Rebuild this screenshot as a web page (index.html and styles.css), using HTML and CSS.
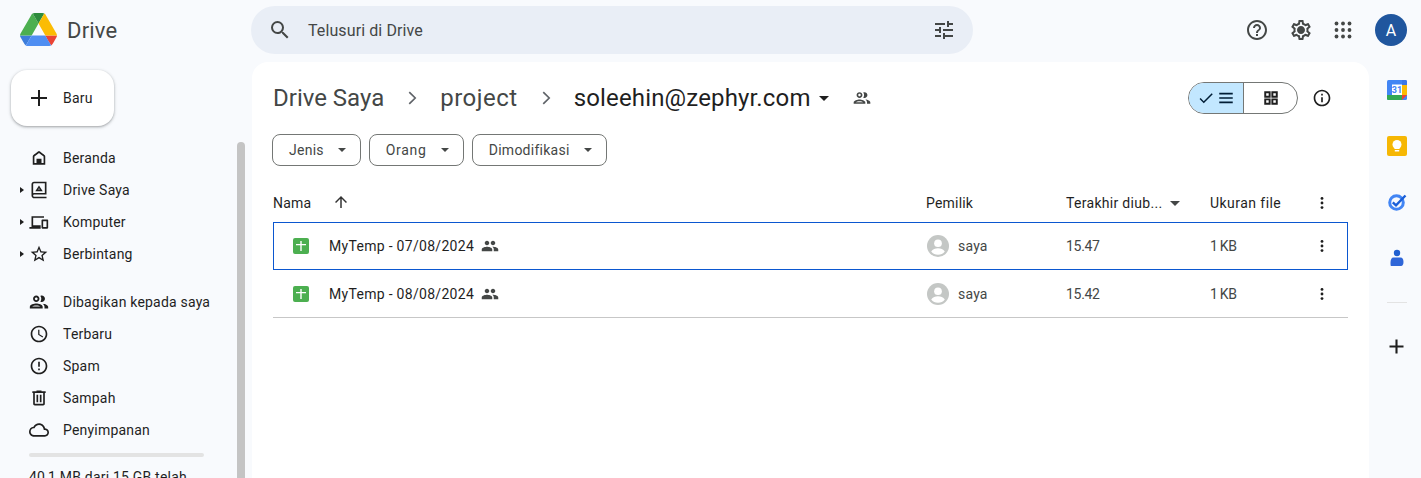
FILE: index.html
```html
<!DOCTYPE html>
<html lang="id">
<head>
    <meta charset="UTF-8">
    <meta name="viewport" content="width=device-width, initial-scale=1.0">
    <title>Drive Saya - Google Drive</title>
    <link rel="stylesheet" href="styles.css">
</head>
<body>
    <svg class="sprite" aria-hidden="true">
        <symbol id="i-group" viewBox="0 0 24 24"><path d="M16 11c1.660 0 2.990-1.340 2.990-3S17.660 5 16 5c-1.660 0-3 1.340-3 3s1.340 3 3 3zm-8 0c1.660 0 2.990-1.340 2.990-3S9.660 5 8 5C6.340 5 5 6.340 5 8s1.340 3 3 3zm0 2c-2.330 0-7 1.170-7 3.500V19h14v-2.500c0-2.330-4.670-3.500-7-3.500zm8 0c-.29 0-.62.02-.97.05 1.160.84 1.970 1.970 1.970 3.450V19h6v-2.500c0-2.330-4.670-3.500-7-3.500z"/></symbol>
        <symbol id="i-people" viewBox="0 0 24 24"><path d="M9 13.750c-2.340 0-7 1.170-7 3.500V19h14v-1.750c0-2.330-4.660-3.500-7-3.500zM4.340 17c.84-.58 2.870-1.250 4.660-1.250s3.820.67 4.660 1.250H4.340zM9 12c1.930 0 3.500-1.570 3.500-3.500S10.930 5 9 5 5.500 6.570 5.500 8.500 7.070 12 9 12zm0-5c.83 0 1.500.67 1.500 1.500S9.830 10 9 10s-1.500-.67-1.500-1.500S8.170 7 9 7zm7.040 6.810c1.160.84 1.960 1.960 1.960 3.440V19h4v-1.750c0-2.020-3.500-3.170-5.960-3.440zM15 12c1.930 0 3.500-1.570 3.500-3.500S16.930 5 15 5c-.54 0-1.040.13-1.500.35.63.89 1 1.980 1 3.150s-.37 2.260-1 3.150c.46.22.96.35 1.500.35z"/></symbol>
        <symbol id="i-more" viewBox="0 0 24 24"><circle cx="12" cy="6.500" r="1.700"/><circle cx="12" cy="12" r="1.700"/><circle cx="12" cy="17.500" r="1.700"/></symbol>
        <symbol id="i-chevron" viewBox="0 0 24 24"><path d="M9 5.500 15.500 12 9 18.500" fill="none" stroke="#5f6368" stroke-width="1.800"/></symbol>
        <symbol id="i-sheet" viewBox="0 0 16 16"><rect width="16" height="16" rx="2" fill="#4caf50"/><path d="M3 6h4.300V3h1.400v3H13v1.300H8.700V13H7.300V7.300H3z" fill="#fff"/></symbol>
        <symbol id="i-avatar" viewBox="0 0 24 24"><circle cx="12" cy="12" r="12" fill="#c4c7c5"/><circle cx="12" cy="9" r="4.200" fill="#fff"/><path d="M4.600 18c1.600-2.600 4.400-3.600 7.400-3.600s5.800 1 7.400 3.600C17.600 20.400 15 21.600 12 21.600S6.400 20.400 4.600 18z" fill="#fff"/></symbol>
    </svg>

    <header class="topbar">
        <div class="brand">
            <svg class="brand-logo" viewBox="0 0 87.300 78"><path d="m6.600 66.850 3.850 6.650c.8 1.400 1.950 2.500 3.300 3.300l13.750-23.800h-27.500c0 1.550.4 3.100 1.200 4.500z" fill="#3d7ddb"/><path d="m43.650 25-13.750-23.800c-1.350.8-2.500 1.900-3.300 3.300l-25.400 44a9.060 9.060 0 0 0 -1.200 4.500h27.500z" fill="#4caf50"/><path d="m73.550 76.800c1.350-.8 2.500-1.900 3.300-3.300l1.600-2.750 7.650-13.250c.8-1.400 1.200-2.950 1.200-4.500h-27.502l5.852 11.500z" fill="#ea4335"/><path d="m43.650 25 13.750-23.800c-1.350-.8-2.900-1.200-4.500-1.200h-18.500c-1.600 0-3.150.45-4.500 1.200z" fill="#2e8b3d"/><path d="m59.800 53h-32.300l-13.750 23.800c1.350.8 2.900 1.200 4.500 1.200h50.800c1.600 0 3.150-.45 4.500-1.200z" fill="#4f8ef2"/><path d="m73.400 26.500-12.700-22c-.8-1.400-1.950-2.500-3.300-3.300l-13.750 23.800 16.150 28h27.450c0-1.550-.4-3.100-1.200-4.500z" fill="#fbbc04"/></svg>
            <span class="brand-name">Drive</span>
        </div>
        <div class="search">
            <svg class="icon" viewBox="0 0 24 24"><path d="M15.500 14h-.79l-.28-.27A6.470 6.470 0 0 0 16 9.500 6.500 6.500 0 1 0 9.500 16c1.610 0 3.090-.59 4.230-1.570l.27.28v.79l5 4.990L20.490 19l-4.990-5zm-6 0C7.010 14 5 11.990 5 9.500S7.010 5 9.500 5 14 7.010 14 9.500 11.990 14 9.500 14z"/></svg>
            <span class="search-text">Telusuri di Drive</span>
            <svg class="icon" viewBox="0 0 24 24"><path d="M3 17v2h6v-2H3zM3 5v2h10V5H3zm10 16v-2h8v-2h-8v-2h-2v6h2zM7 9v2H3v2h4v2h2V9H7zm14 4v-2H11v2h10zm-6-4h2V7h4V5h-4V3h-2v6z"/></svg>
        </div>
        <div class="top-actions">
            <svg class="icon" viewBox="0 0 24 24"><path d="M11 18h2v-2h-2v2zm1-16C6.480 2 2 6.480 2 12s4.480 10 10 10 10-4.480 10-10S17.520 2 12 2zm0 18c-4.410 0-8-3.590-8-8s3.590-8 8-8 8 3.590 8 8-3.590 8-8 8zm0-14c-2.210 0-4 1.790-4 4h2c0-1.100.9-2 2-2s2 .9 2 2c0 2-3 1.750-3 5h2c0-2.250 3-2.500 3-5 0-2.210-1.790-4-4-4z"/></svg>
            <svg class="icon gear" viewBox="0 0 24 24"><path d="M19.430 12.980c.04-.32.07-.64.07-.98 0-.34-.03-.66-.07-.98l2.110-1.650c.19-.15.24-.42.12-.64l-2-3.460c-.09-.16-.26-.25-.44-.25-.06 0-.12.01-.17.03l-2.490 1c-.52-.4-1.080-.73-1.690-.98l-.38-2.650C14.460 2.180 14.250 2 14 2h-4c-.25 0-.46.18-.49.42l-.38 2.650c-.61.25-1.170.59-1.690.98l-2.490-1c-.06-.02-.12-.03-.18-.03-.17 0-.34.09-.43.25l-2 3.460c-.13.22-.07.49.12.64l2.110 1.650c-.04.32-.07.65-.07.98 0 .33.03.66.07.98l-2.110 1.650c-.19.15-.24.42-.12.64l2 3.460c.09.16.26.25.44.25.06 0 .12-.01.17-.03l2.490-1c.52.4 1.080.73 1.690.98l.38 2.650c.03.24.24.42.49.42h4c.25 0 .46-.18.49-.42l.38-2.650c.61-.25 1.170-.59 1.690-.98l2.490 1c.06.02.12.03.18.03.17 0 .34-.09.43-.25l2-3.460c.12-.22.07-.49-.12-.64l-2.110-1.650zm-1.980-1.710c.04.31.05.52.05.73 0 .21-.02.43-.05.73l-.14 1.130.89.7 1.080.84-.7 1.210-1.270-.51-1.040-.42-.9.68c-.43.32-.84.56-1.250.73l-1.060.43-.16 1.130-.2 1.350h-1.400l-.19-1.350-.16-1.130-1.060-.43c-.43-.18-.83-.41-1.230-.71l-.91-.7-1.060.43-1.270.51-.7-1.210 1.080-.84.89-.7-.14-1.130c-.03-.31-.05-.54-.05-.74s.02-.43.05-.73l.14-1.130-.89-.7-1.080-.84.7-1.210 1.270.51 1.040.42.9-.68c.43-.32.84-.56 1.250-.73l1.060-.43.16-1.130.2-1.350h1.390l.19 1.350.16 1.130 1.060.43c.43.18.83.41 1.230.71l.91.7 1.060-.43 1.270-.51.7 1.210-1.070.85-.89.7.14 1.130zM12 8c-2.210 0-4 1.790-4 4s1.790 4 4 4 4-1.790 4-4-1.790-4-4-4z"/></svg>
            <svg class="icon" viewBox="0 0 24 24"><circle cx="5.500" cy="5.500" r="1.900"/><circle cx="12" cy="5.500" r="1.900"/><circle cx="18.500" cy="5.500" r="1.900"/><circle cx="5.500" cy="12" r="1.900"/><circle cx="12" cy="12" r="1.900"/><circle cx="18.500" cy="12" r="1.900"/><circle cx="5.500" cy="18.500" r="1.900"/><circle cx="12" cy="18.500" r="1.900"/><circle cx="18.500" cy="18.500" r="1.900"/></svg>
            <div class="account">A</div>
        </div>
    </header>

    <div class="layout">
        <aside class="sidebar">
            <button class="new-btn">
                <svg class="icon" viewBox="0 0 24 24"><path d="M20 13h-7v7h-2v-7H4v-2h7V4h2v7h7v2z"/></svg>
                <span>Baru</span>
            </button>
            <div class="side-scroll">
                <nav class="nav">
                    <ul class="nav-group">
                        <li class="nav-item">
                            <svg class="icon" viewBox="0 0 24 24"><path d="M12 3.500c-.6 0-6.200 4.300-7 5.200-.5.5-.5 1-.5 1.800V20h15v-9.500c0-.8 0-1.300-.5-1.800-.8-.9-6.400-5.200-7-5.200zM17.500 18H15v-5H9v5H6.500v-7.800L12 5.900l5.500 4.300V18z"/></svg>
                            <span>Beranda</span>
                        </li>
                        <li class="nav-item">
                            <span class="caret"></span>
                            <svg class="icon" viewBox="0 0 24 24"><path d="M6 2h15v15.500H6.500c-.8 0-1.500.4-1.500 1.250S5.700 20 6.500 20H21v2H6.500C4.500 22 3 20.500 3 18.500V5c0-1.700 1.300-3 3-3zm0 2c-.6 0-1 .4-1 1v10.800c.5-.2 1-.3 1.500-.3H19V4H6zm6 2.500 4.500 7h-9l4.500-7zm0 3.400L11 11.500h2L12 9.900z" fill-rule="evenodd"/></svg>
                            <span>Drive Saya</span>
                        </li>
                        <li class="nav-item">
                            <span class="caret"></span>
                            <svg class="icon" viewBox="0 0 24 24"><path d="M3 5h15v2H5v9h9v4H.5v-2H3V5zm13 4h6c.6 0 1 .4 1 1v9c0 .6-.4 1-1 1h-6c-.6 0-1-.4-1-1v-9c0-.6.4-1 1-1zm1 2v7h4v-7h-4z"/></svg>
                            <span>Komputer</span>
                        </li>
                        <li class="nav-item">
                            <span class="caret"></span>
                            <svg class="icon" viewBox="0 0 24 24"><path d="M22 9.240l-7.190-.62L12 2 9.190 8.630 2 9.240l5.460 4.730L5.820 21 12 17.270 18.180 21l-1.630-7.030L22 9.240zM12 15.400l-3.760 2.270 1-4.280-3.320-2.880 4.380-.38L12 6.100l1.710 4.040 4.380.38-3.320 2.880 1 4.280L12 15.400z"/></svg>
                            <span>Berbintang</span>
                        </li>
                    </ul>
                    <ul class="nav-group">
                        <li class="nav-item">
                            <svg class="icon icon-wide"><use href="#i-people"/></svg>
                            <span>Dibagikan kepada saya</span>
                        </li>
                        <li class="nav-item">
                            <svg class="icon" viewBox="0 0 24 24"><path d="M11.990 2C6.470 2 2 6.480 2 12s4.470 10 9.990 10C17.520 22 22 17.520 22 12S17.520 2 11.990 2zM12 20c-4.420 0-8-3.580-8-8s3.580-8 8-8 8 3.580 8 8-3.580 8-8 8zm.5-13H11v6l5.250 3.150.75-1.230-4.500-2.670z"/></svg>
                            <span>Terbaru</span>
                        </li>
                        <li class="nav-item">
                            <svg class="icon" viewBox="0 0 24 24"><path d="M11 15h2v2h-2zm0-8h2v6h-2zm1-5C6.480 2 2 6.480 2 12s4.480 10 10 10 10-4.480 10-10S17.520 2 12 2zm0 18c-4.410 0-8-3.590-8-8s3.590-8 8-8 8 3.590 8 8-3.590 8-8 8z"/></svg>
                            <span>Spam</span>
                        </li>
                        <li class="nav-item">
                            <svg class="icon" viewBox="0 0 24 24"><path d="M15 4V3H9v1H4v2h1v13c0 1.100.9 2 2 2h10c1.100 0 2-.9 2-2V6h1V4h-5zm2 15H7V6h10v13zM9 8h2v9H9zm4 0h2v9h-2z"/></svg>
                            <span>Sampah</span>
                        </li>
                        <li class="nav-item">
                            <svg class="icon" viewBox="0 0 24 24"><path d="M19.350 10.040C18.670 6.590 15.640 4 12 4 9.110 4 6.600 5.640 5.350 8.040 2.340 8.360 0 10.910 0 14c0 3.310 2.690 6 6 6h13c2.760 0 5-2.240 5-5 0-2.640-2.050-4.780-4.650-4.960zM19 18H6c-2.210 0-4-1.790-4-4 0-2.050 1.530-3.760 3.560-3.970l1.070-.11.5-.95C8.080 7.140 9.940 6 12 6c2.620 0 4.880 1.860 5.390 4.430l.3 1.500 1.530.11c1.560.1 2.780 1.410 2.780 2.960 0 1.650-1.350 3-3 3z"/></svg>
                            <span>Penyimpanan</span>
                        </li>
                    </ul>
                    <div class="storage-bar"></div>
                    <div class="storage-text">40,1 MB dari 15 GB telah digunakan</div>
                </nav>
                <div class="scrollbar"></div>
            </div>
        </aside>

        <main class="content">
            <div class="title-row">
                <div class="crumbs">
                    <span class="crumb">Drive Saya</span>
                    <svg class="crumb-sep"><use href="#i-chevron"/></svg>
                    <span class="crumb mid">project</span>
                    <svg class="crumb-sep"><use href="#i-chevron"/></svg>
                    <span class="crumb current">soleehin@zephyr.com</span>
                    <span class="crumb-caret"></span>
                    <svg class="crumb-share"><use href="#i-people"/></svg>
                </div>
                <div class="view-tools">
                    <div class="toggle">
                        <div class="toggle-part on">
                            <svg class="icon-sm" viewBox="0 0 24 24"><path d="M9 16.200 4.800 12l-1.400 1.400L9 19 21 7l-1.400-1.400z"/></svg>
                            <svg class="icon-sm" viewBox="0 0 24 24"><path d="M3 5h18v2.200H3zm0 5.900h18v2.200H3zm0 5.900h18V19H3z"/></svg>
                        </div>
                        <div class="toggle-part">
                            <svg class="icon-sm" viewBox="0 0 24 24"><path d="M3 3h8.500v8.500H3V3zm2.600 2.600v3.300h3.300V5.600H5.600zM12.500 3H21v8.500h-8.500V3zm2.600 2.600v3.300h3.300V5.600h-3.300zM3 12.500h8.500V21H3v-8.500zm2.600 2.600v3.300h3.300v-3.300H5.600zm6.900-2.600H21V21h-8.500v-8.500zm2.600 2.600v3.300h3.300v-3.300h-3.300z"/></svg>
                        </div>
                    </div>
                    <svg class="icon info" viewBox="0 0 24 24"><path d="M11 7h2v2h-2zm0 4h2v6h-2zm1-9C6.480 2 2 6.480 2 12s4.480 10 10 10 10-4.480 10-10S17.520 2 12 2zm0 18c-4.410 0-8-3.590-8-8s3.590-8 8-8 8 3.590 8 8-3.590 8-8 8z"/></svg>
                </div>
            </div>

            <div class="chips">
                <button class="chip">Jenis<span class="caret-down"></span></button>
                <button class="chip chip-people">Orang<span class="caret-down"></span></button>
                <button class="chip">Dimodifikasi<span class="caret-down"></span></button>
            </div>

            <div class="file-list">
                <div class="list-head">
                    <div class="cell-name">
                        <span>Nama</span>
                        <svg class="sort-arrow" viewBox="0 0 24 24"><path d="M4 12l1.410 1.410L11 7.830V20h2V7.830l5.580 5.590L20 12l-8-8-8 8z"/></svg>
                    </div>
                    <div>Pemilik</div>
                    <div class="cell-mod">Terakhir diub...<span class="caret-head"></span></div>
                    <div class="cell-size-head">Ukuran file</div>
                    <svg class="more"><use href="#i-more"/></svg>
                </div>
                <div class="file-row selected">
                    <div class="cell-name file-name">
                        <svg class="sheet"><use href="#i-sheet"/></svg>
                        <span>MyTemp - 07/08/2024</span>
                        <svg class="shared"><use href="#i-group"/></svg>
                    </div>
                    <div class="cell-owner">
                        <svg class="avatar"><use href="#i-avatar"/></svg>
                        <span>saya</span>
                    </div>
                    <div class="cell-meta">15.47</div>
                    <div class="cell-meta size">1 KB</div>
                    <svg class="more"><use href="#i-more"/></svg>
                </div>
                <div class="file-row">
                    <div class="cell-name file-name">
                        <svg class="sheet"><use href="#i-sheet"/></svg>
                        <span>MyTemp - 08/08/2024</span>
                        <svg class="shared"><use href="#i-group"/></svg>
                    </div>
                    <div class="cell-owner">
                        <svg class="avatar"><use href="#i-avatar"/></svg>
                        <span>saya</span>
                    </div>
                    <div class="cell-meta">15.42</div>
                    <div class="cell-meta size">1 KB</div>
                    <svg class="more"><use href="#i-more"/></svg>
                </div>
            </div>
        </main>

        <aside class="rail">
            <svg class="rail-icon" viewBox="0 0 20 20"><rect width="20" height="20" rx="1.500" fill="#4285f4"/><rect x="5" y="4.500" width="10" height="10.500" fill="#fff"/><path d="M15 0h3.500A1.500 1.500 0 0 1 20 1.500V5h-5z" fill="#3b78e7"/><rect x="15" y="5" width="5" height="10" fill="#fbbc04"/><path d="M0 15h15v5H1.500A1.500 1.500 0 0 1 0 18.500z" fill="#34a853"/><path d="M15 15h5l-5 5z" fill="#ea4335"/><text x="10" y="13.200" class="cal-num">31</text></svg>
            <svg class="rail-icon" viewBox="0 0 20 20"><rect width="20" height="20" rx="2" fill="#f6b704"/><circle cx="10" cy="8.500" r="4.500" fill="#fff"/><rect x="7.500" y="11" width="5" height="2" fill="#fff"/><rect x="7.800" y="14" width="4.400" height="1.500" fill="#fff"/></svg>
            <svg class="rail-icon" viewBox="0 0 20 20"><circle cx="9.500" cy="10.500" r="6.800" fill="none" stroke="#4285f4" stroke-width="3"/><path d="M5.800 10.300 9 13.300 18.500 3.500" fill="none" stroke="#1a5fd8" stroke-width="2.400"/></svg>
            <svg class="rail-icon" viewBox="0 0 20 20"><circle cx="10" cy="5" r="3.200" fill="#1f5fd0"/><path d="M6.500 9.500h7c2 0 3 2 3 4.500 0 2-.8 4-2.500 4H4C3.500 18 3.500 16 3.500 14.500c0-3 1-5 3-5z" fill="#2f66d8"/></svg>
            <div class="rail-sep"></div>
            <svg class="icon" viewBox="0 0 24 24"><path d="M20 13.200h-6.800V20h-2.400v-6.800H4v-2.400h6.800V4h2.400v6.800H20z"/></svg>
        </aside>
    </div>
</body>
</html>
```

FILE: styles.css
```css
* {
    box-sizing: border-box;
}

html, body {
    height: 100%;
}

body {
    margin: 0;
    height: 100vh;
    overflow: hidden;
    background: #f8fafd;
    color: #1f1f1f;
    font-family: Roboto, "Liberation Sans", sans-serif;
    font-size: 14px;
    letter-spacing: 0.2px;
    display: flex;
    flex-direction: column;
}

ul {
    list-style: none;
    margin: 0;
    padding: 0;
}

button {
    font-family: inherit;
    letter-spacing: inherit;
    cursor: pointer;
}

.sprite {
    display: none;
}

.icon {
    width: 24px;
    height: 24px;
    flex: none;
    fill: #1f1f1f;
}

.icon-sm {
    width: 18px;
    height: 18px;
    flex: none;
    fill: #1f1f1f;
}

/* top bar */
.topbar {
    height: 62px;
    flex: none;
    display: flex;
    padding-top: 6px;
}

.brand {
    width: 251px;
    height: 48px;
    flex: none;
    display: flex;
    align-items: center;
    padding-left: 20px;
    gap: 10px;
}

.brand-logo {
    width: 37px;
    height: 33px;
    margin-top: -1px;
}

.brand-name {
    font-size: 22px;
    color: #444746;
}

.search {
    width: 722px;
    height: 48px;
    flex: none;
    display: flex;
    align-items: center;
    padding: 0 17px 0 17px;
    gap: 16px;
    background: #e9eef6;
    border-radius: 24px;
}

.search .icon {
    fill: #444746;
}

.search-text {
    flex: 1;
    font-size: 16px;
    letter-spacing: 0.1px;
    color: #444746;
}

.top-actions {
    flex: 1;
    display: flex;
    align-items: center;
    height: 48px;
    padding-left: 272px;
    gap: 19px;
}

.top-actions .icon {
    fill: #444746;
}

.top-actions .gear {
    margin: 0 -1px 0 1px;
}

.account {
    width: 32px;
    height: 32px;
    margin-left: 1px;
    border-radius: 50%;
    background: #20569e;
    color: #fff;
    font-size: 16px;
    display: flex;
    align-items: center;
    justify-content: center;
}

/* main area */
.layout {
    flex: 1;
    min-height: 0;
    display: flex;
}

.sidebar {
    width: 252px;
    flex: none;
    display: flex;
    flex-direction: column;
    min-height: 0;
}

.new-btn {
    width: 103px;
    height: 56px;
    flex: none;
    margin: 8px 0 16px 11px;
    padding: 0 0 0 16px;
    border: none;
    border-radius: 16px;
    background: #fff;
    box-shadow: 0 1px 2px rgba(60, 64, 67, 0.3), 0 1px 3px 1px rgba(60, 64, 67, 0.15);
    display: flex;
    align-items: center;
    gap: 12px;
    font-size: 14px;
    color: #1f1f1f;
}

.side-scroll {
    flex: 1;
    min-height: 0;
    display: flex;
    overflow: hidden;
}

.nav {
    width: 237px;
    flex: none;
    padding-left: 19px;
}

.nav-group {
    margin-bottom: 16px;
}

.nav-item {
    height: 32px;
    display: flex;
    align-items: center;
    padding-left: 8px;
    position: relative;
    color: #1f1f1f;
}

.nav-item .icon {
    width: 20px;
    height: 20px;
    margin: 0 14px 0 2px;
}

.nav-item .icon-wide {
    width: 22px;
    height: 22px;
    margin: 0 13px 0 1px;
}

.caret {
    position: absolute;
    left: 1px;
    top: 13px;
    border-left: 4px solid #1f1f1f;
    border-top: 3px solid transparent;
    border-bottom: 3px solid transparent;
}

.storage-bar {
    width: 175px;
    height: 4px;
    margin: -9px 0 0 10px;
    border-radius: 2px;
    background: #e3e3e3;
}

.storage-text {
    width: 175px;
    margin: 12px 0 0 10px;
}

.scrollbar {
    width: 8px;
    flex: none;
    border-radius: 4px 4px 0 0;
    background: #c4c4c4;
}

/* file area */
.content {
    width: 1117px;
    flex: none;
    background: #fff;
    border-radius: 16px 16px 0 0;
    padding: 0 21px;
    overflow: hidden;
}

.title-row {
    height: 72px;
    display: flex;
    align-items: center;
    justify-content: space-between;
}

.crumbs {
    display: flex;
    align-items: center;
}

.crumb {
    font-size: 24px;
    letter-spacing: 0;
    color: #444746;
}

.crumb.mid {
    letter-spacing: 0.5px;
}

.crumb.current {
    letter-spacing: 0.15px;
    color: #1f1f1f;
}

.crumb-sep {
    width: 22px;
    height: 22px;
    margin: 0 17px;
}

.crumb-caret {
    margin-left: 8px;
    border-top: 5px solid #1f1f1f;
    border-left: 5px solid transparent;
    border-right: 5px solid transparent;
}

.crumb-share {
    width: 20px;
    height: 20px;
    margin-left: 23px;
    fill: #444746;
}

.view-tools {
    display: flex;
    align-items: center;
    gap: 14px;
    margin-right: 16px;
}

.view-tools .info {
    width: 20px;
    height: 20px;
}

.toggle {
    width: 110px;
    height: 32px;
    display: flex;
    border: 1px solid #747775;
    border-radius: 16px;
    overflow: hidden;
}

.toggle-part {
    flex: 1;
    display: flex;
    align-items: center;
    justify-content: center;
}

.toggle-part.on {
    flex: none;
    width: 55px;
    gap: 2px;
    background: #c2e7ff;
    border-right: 1px solid #747775;
}

.toggle-part.on .icon-sm {
    fill: #001d35;
}

.chips {
    display: flex;
    gap: 8px;
    margin-left: -1px;
}

.chip {
    height: 32px;
    padding: 0 14px 0 16px;
    display: flex;
    align-items: center;
    gap: 14px;
    background: #fff;
    border: 1px solid #747775;
    border-radius: 8px;
    font-size: 14px;
    letter-spacing: 0.25px;
    color: #444746;
}

.chip-people {
    width: 95px;
    justify-content: space-between;
    letter-spacing: 0.7px;
}

.caret-down {
    border-top: 4px solid #444746;
    border-left: 4px solid transparent;
    border-right: 4px solid transparent;
}

/* list */
.file-list {
    margin-top: 20px;
    width: 1075px;
}

.list-head,
.file-row {
    display: grid;
    grid-template-columns: 653px 140px 144px 102px 24px;
    align-items: center;
}

.list-head {
    height: 36px;
    padding-bottom: 2px;
    color: #1f1f1f;
}

.cell-size-head {
    letter-spacing: 0.45px;
}

.cell-name {
    display: flex;
    align-items: center;
}

.sort-arrow {
    width: 18px;
    height: 18px;
    margin-left: 21px;
    margin-top: -3px;
    fill: #333;
}

.cell-mod {
    display: flex;
    align-items: center;
    letter-spacing: 0.3px;
}

.caret-head {
    margin-left: 8px;
    border-top: 5px solid #444746;
    border-left: 5px solid transparent;
    border-right: 5px solid transparent;
}

.more {
    width: 20px;
    height: 20px;
    fill: #1f1f1f;
}

.file-row {
    height: 48px;
    color: #444746;
    border-bottom: 1px solid #c7c7c7;
}

.file-row.selected {
    border-bottom: none;
    box-shadow: inset 0 0 0 1px #0b57d0;
}

.file-name {
    color: #1f1f1f;
    padding-left: 20px;
    letter-spacing: 0.3px;
}

.cell-meta {
    letter-spacing: -0.3px;
}

.cell-meta.size {
    word-spacing: -1px;
}

.sheet {
    width: 16px;
    height: 16px;
    margin-right: 20px;
}

.shared {
    width: 18px;
    height: 18px;
    margin-left: 7px;
    fill: #444746;
}

.cell-owner {
    display: flex;
    align-items: center;
    gap: 9px;
    padding-left: 1px;
}

.avatar {
    width: 22px;
    height: 22px;
}

/* right rail */
.rail {
    flex: 1;
    display: flex;
    flex-direction: column;
    align-items: center;
    padding: 18px 0 0 3px;
}

.rail-icon {
    width: 20px;
    height: 20px;
    margin-bottom: 36px;
}

.rail-sep {
    width: 20px;
    height: 1px;
    background: #e3e3e3;
    margin: -2px 0 32px;
}

.rail .icon {
    width: 21px;
    height: 21px;
    margin-top: 1px;
}

.cal-num {
    font-family: Roboto, sans-serif;
    font-size: 9px;
    font-weight: 700;
    fill: #4285f4;
    text-anchor: middle;
}
```
